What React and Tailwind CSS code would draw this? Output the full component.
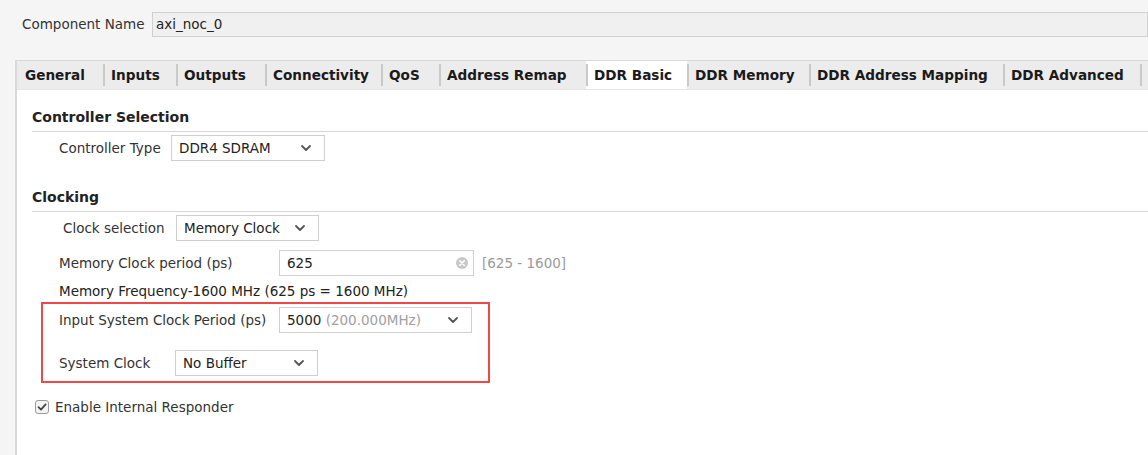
import React from "react";

const tabs = [
  { label: "General", w: "w-[86px]" },
  { label: "Inputs", w: "w-[73px]" },
  { label: "Outputs", w: "w-[89px]" },
  { label: "Connectivity", w: "w-[116px]" },
  { label: "QoS", w: "w-[58px]" },
  { label: "Address Remap", w: "w-[147px]" },
  { label: "DDR Basic", w: "w-[101px]", active: true },
  { label: "DDR Memory", w: "w-[122px]" },
  { label: "DDR Address Mapping", w: "w-[194px]" },
  { label: "DDR Advanced", w: "w-[137px]" },
];

const Chevron = () => (
  <svg width="12" height="8" viewBox="0 0 12 8" className="shrink-0">
    <path d="M2 2 L6 6 L10 2" fill="none" stroke="#555" strokeWidth="1.8" strokeLinecap="round" strokeLinejoin="round" />
  </svg>
);

const Select = ({ w, children }) => (
  <div className={`${w} h-[26px] bg-white border border-[#cfcfcf] flex items-center justify-between pl-[7px] pr-[12px] text-[#222]`}>
    <span className="truncate">{children}</span>
    <Chevron />
  </div>
);

const SectionHeader = ({ children }) => (
  <div className="font-bold text-[14px] text-[#222] border-b border-[#d6d6d6] pb-[3px]">{children}</div>
);

export default function App() {
  return (
    <div className="w-full h-[455px] overflow-hidden bg-[#f5f5f5] text-[13.5px] text-[#333] font-['DejaVu_Sans',sans-serif]">
      <div className="flex items-center pt-[12px] pl-[22px]">
        <span className="w-[123px] whitespace-nowrap">Component Name</span>
        <div className="ml-[7px] flex-1 h-[25px] bg-[#f0f0f0] border border-[#d0d0d0] flex items-center pl-[3px] text-[#222]">
          axi_noc_0
        </div>
      </div>

      <div className="mt-[23px] ml-[15px] border-l-2 border-t border-[#d9d9d9] h-[400px] flex flex-col">
        <div className="flex h-[29px] bg-[#ececec] border-b border-[#e6e6e6]">
          {tabs.map((t) => (
            <div
              key={t.label}
              className={`${t.w} shrink-0 flex items-center font-bold text-[13.6px] text-[#1a1a1a] ${t.active ? "bg-white" : ""}`}
            >
              {t.label !== "General" ? (
                <div className="w-[2px] h-[22px] bg-[#c9c9c9]" />
              ) : (
                <div className="w-[2px]" />
              )}
              <span className="pl-[6px] whitespace-nowrap">{t.label}</span>
            </div>
          ))}
          <div className="w-[2px] h-[22px] bg-[#c9c9c9] self-center" />
        </div>

        <div className="flex-1 bg-white pl-[15px] pt-[17px]">
          <SectionHeader>Controller Selection</SectionHeader>
          <div className="flex items-center mt-[3px] pl-[27px]">
            <span className="w-[112px] whitespace-nowrap">Controller Type</span>
            <Select w="w-[154px]">DDR4 SDRAM</Select>
          </div>

          <div className="mt-[26px]">
            <SectionHeader>Clocking</SectionHeader>
          </div>
          <div className="flex items-center mt-[3px] pl-[31px]">
            <span className="w-[113px] whitespace-nowrap">Clock selection</span>
            <Select w="w-[143px]">Memory Clock</Select>
          </div>

          <div className="flex items-center mt-[9px] pl-[27px]">
            <span className="w-[220px] whitespace-nowrap">Memory Clock period (ps)</span>
            <div className="w-[195px] h-[26px] bg-white border border-[#cfcfcf] flex items-center justify-between pl-[7px] pr-[5px] text-[#222]">
              <span>625</span>
              <svg width="12" height="12" viewBox="0 0 12 12">
                <circle cx="6" cy="6" r="6" fill="#c8c8c8" />
                <path d="M3.8 3.8 L8.2 8.2 M8.2 3.8 L3.8 8.2" stroke="#fff" strokeWidth="1.6" strokeLinecap="round" />
              </svg>
            </div>
            <span className="ml-[8px] text-[#9a9a9a]">[625 - 1600]</span>
          </div>

          <div className="pl-[27px] mt-[6px] leading-[18px] text-[#222]">Memory Frequency-1600 MHz (625 ps = 1600 MHz)</div>

          <div className="ml-[9px] mt-[2px] w-[449px] h-[81px] border-2 border-[#f04848] pl-[16px] pt-[3px]">
            <div className="flex items-center">
              <span className="w-[220px] whitespace-nowrap">Input System Clock Period (ps)</span>
              <div className="w-[193px] h-[26px] bg-white border border-[#cfcfcf] flex items-center justify-between pl-[7px] pr-[12px]">
                <span>
                  <span className="text-[#222]">5000</span>{" "}
                  <span className="text-[#a0a0a0]">(200.000MHz)</span>
                </span>
                <Chevron />
              </div>
            </div>
            <div className="flex items-center mt-[17px]">
              <span className="w-[116px] whitespace-nowrap">System Clock</span>
              <Select w="w-[143px]">No Buffer</Select>
            </div>
          </div>

          <div className="flex items-center mt-[14px] pl-[3px]">
            <div className="w-[14px] h-[14px] border border-[#9a9a9a] rounded-[3px] bg-[#f4f4f4] flex items-center justify-center">
              <svg width="10" height="10" viewBox="0 0 10 10">
                <path d="M1.5 5.2 L4 7.6 L8.6 2.4" fill="none" stroke="#444" strokeWidth="1.8" strokeLinecap="round" strokeLinejoin="round" />
              </svg>
            </div>
            <span className="ml-[6px]">Enable Internal Responder</span>
          </div>
        </div>
      </div>
    </div>
  );
}
